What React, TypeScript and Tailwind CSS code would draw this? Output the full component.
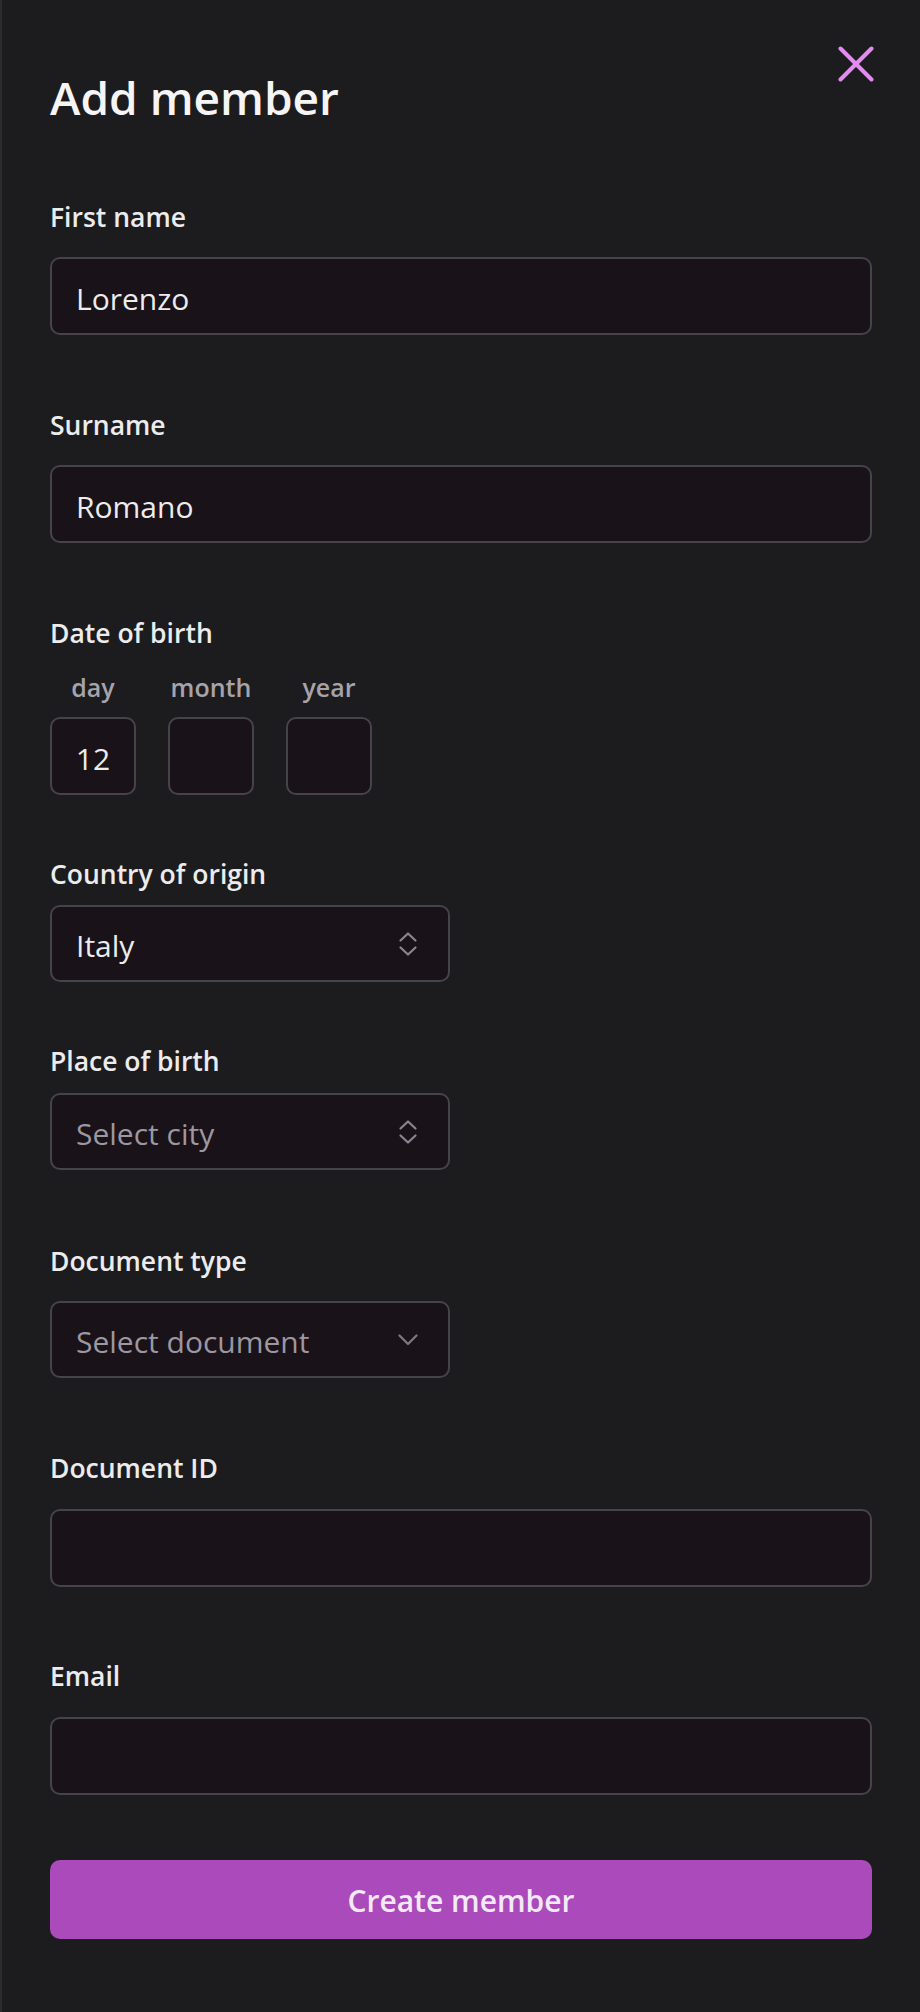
import { ChangeEvent, useState } from "react";

const labelCls = "block text-[26.5px] leading-[26px] font-semibold text-[#ececee]";
const fieldCls =
  "w-full h-[78px] rounded-[10px] border-2 border-[#46434a] bg-[#191219] pl-[24px] pr-[24px] pt-[4px] text-[30px] text-[#ececec] placeholder:text-[#9c97a0] outline-none focus:border-[#aa4abb]";

function ChevronUpDown() {
  return (
    <svg width="20" height="26" viewBox="0 0 20 26" fill="none" stroke="#8a8590" strokeWidth="2.2" strokeLinecap="round" strokeLinejoin="round">
      <path d="M2.5 9.5 L10 2.5 L17.5 9.5" />
      <path d="M2.5 16.5 L10 23.5 L17.5 16.5" />
    </svg>
  );
}

function ChevronDown() {
  return (
    <svg width="20" height="12" viewBox="0 0 20 12" fill="none" stroke="#7e7983" strokeWidth="2.2" strokeLinecap="round" strokeLinejoin="round">
      <path d="M1.5 1.5 L10 10 L18.5 1.5" />
    </svg>
  );
}

function SelectBox({ value, placeholder, icon }: { value?: string; placeholder: string; icon: "updown" | "down" }) {
  return (
    <button
      type="button"
      className="flex w-[400px] h-[77px] items-center justify-between rounded-[10px] border-2 border-[#46434a] bg-[#191219] pl-[24px] pr-[30px] text-left"
    >
      <span className={`pt-[4px] text-[30px] ${value ? "text-[#ececec]" : "text-[#9c97a0]"}`}>{value || placeholder}</span>
      {icon === "updown" ? <ChevronUpDown /> : <ChevronDown />}
    </button>
  );
}

export default function App() {
  const [form, setForm] = useState({
    firstName: "Lorenzo",
    surname: "Romano",
    day: "12",
    month: "",
    year: "",
    documentId: "",
    email: "",
  });

  const update = (key: keyof typeof form) => (e: ChangeEvent<HTMLInputElement>) =>
    setForm({ ...form, [key]: e.target.value });

  return (
    <div className="min-h-screen bg-[#1c1c1e] border-l-2 border-[#2c2c2f] pl-[48px] pr-[48px] pt-[46px] pb-[70px] font-['Segoe_UI','Open_Sans',sans-serif]">
      <div className="flex items-start justify-between">
        <h1 className="mt-[28px] text-[46px] leading-none font-semibold text-[#f5f5f5]">Add member</h1>
        <button type="button" aria-label="Close" className="-mr-[2px]">
          <svg width="36" height="36" viewBox="0 0 36 36" fill="none" stroke="#e38cf0" strokeWidth="4" strokeLinecap="round">
            <path d="M2.5 2.5 L33.5 33.5" />
            <path d="M33.5 2.5 L2.5 33.5" />
          </svg>
        </button>
      </div>

      <form className="flex flex-col" onSubmit={(e) => e.preventDefault()}>
        <label className={`${labelCls} mt-[84px]`}>First name</label>
        <input className={`${fieldCls} mt-[27px]`} value={form.firstName} onChange={update("firstName")} />

        <label className={`${labelCls} mt-[77px]`}>Surname</label>
        <input className={`${fieldCls} mt-[27px]`} value={form.surname} onChange={update("surname")} />

        <label className={`${labelCls} mt-[77px]`}>Date of birth</label>
        <div className="mt-[29px] flex gap-[32px]">
          {([
            ["day", "day"],
            ["month", "month"],
            ["year", "year"],
          ] as const).map(([key, text]) => (
            <div key={key} className="flex w-[86px] flex-col items-center">
              <span className="text-[25px] leading-[24px] font-semibold text-[#a7a3aa]">{text}</span>
              <input
                className="mt-[18px] w-[86px] h-[78px] rounded-[10px] border-2 border-[#46434a] bg-[#191219] pt-[4px] text-center text-[30px] text-[#ececec] outline-none"
                value={form[key]}
                onChange={update(key)}
              />
            </div>
          ))}
        </div>

        <label className={`${labelCls} mt-[66px]`}>Country of origin</label>
        <div className="mt-[18px]">
          <SelectBox value="Italy" placeholder="Select country" icon="updown" />
        </div>

        <label className={`${labelCls} mt-[66px]`}>Place of birth</label>
        <div className="mt-[19px]">
          <SelectBox placeholder="Select city" icon="updown" />
        </div>

        <label className={`${labelCls} mt-[78px]`}>Document type</label>
        <div className="mt-[27px]">
          <SelectBox placeholder="Select document" icon="down" />
        </div>

        <label className={`${labelCls} mt-[77px]`}>Document ID</label>
        <input className={`${fieldCls} mt-[28px]`} value={form.documentId} onChange={update("documentId")} />

        <label className={`${labelCls} mt-[76px]`}>Email</label>
        <input className={`${fieldCls} mt-[28px]`} value={form.email} onChange={update("email")} />

        <button
          type="submit"
          className="mt-[65px] h-[79px] w-full rounded-[10px] bg-[#aa4abb] pt-[2px] text-[30px] font-semibold text-[#f3eaf5]"
        >
          Create member
        </button>
      </form>
    </div>
  );
}
